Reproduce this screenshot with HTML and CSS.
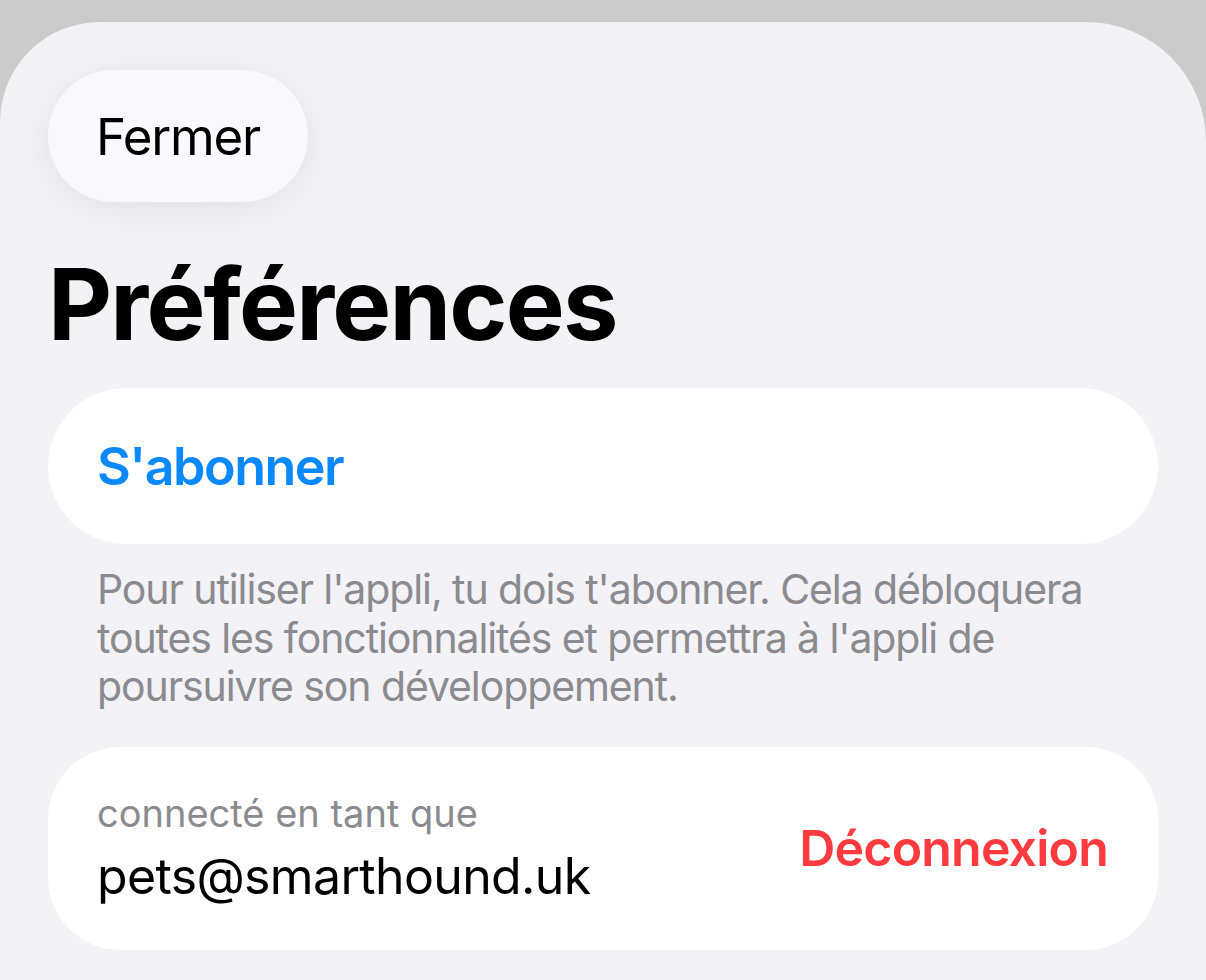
FILE: index.html
```html
<!DOCTYPE html>
<html lang="fr">
<head>
<meta charset="utf-8">
<title>Préférences</title>
<link rel="stylesheet" href="styles.css">
</head>
<body>
<div class="sheet">
  <button class="close-btn">Fermer</button>
  <h1 class="title">Préférences</h1>
  <div class="card card-subscribe">
    <span class="subscribe">S'abonner</span>
  </div>
  <p class="footer">Pour utiliser l'appli, tu dois t'abonner. Cela débloquera toutes les fonctionnalités et permettra à l'appli de poursuivre son développement.</p>
  <div class="card card-account">
    <div class="account">
      <div class="account-label">connecté en tant que</div>
      <div class="account-email">pets@smarthound.uk</div>
    </div>
    <span class="logout">Déconnexion</span>
  </div>
</div>
</body>
</html>
```
FILE: styles.css
```css
html, body {
  margin: 0;
  padding: 0;
}
body {
  background: #cbcbcb;
  padding-top: 22px;
  font-family: Inter, "Noto Sans", sans-serif;
  overflow: hidden;
}
.sheet {
  background: #f2f2f7;
  border-radius: 100px 120px 0 0;
  min-height: 958px;
  box-sizing: border-box;
  padding: 48px 48px 0 48px;
  display: flex;
  flex-direction: column;
  align-items: flex-start;
}
.close-btn {
  width: 260px;
  height: 132px;
  border: none;
  border-radius: 66px;
  background: #f9f9fd;
  box-shadow: 0 8px 50px rgba(0, 0, 0, 0.07);
  font-family: inherit;
  font-size: 51px;
  letter-spacing: -1.2px;
  color: #000;
  padding: 0;
  display: flex;
  align-items: center;
  justify-content: center;
}
.title {
  margin: 52px 0 0 0;
  font-size: 99px;
  line-height: 100px;
  font-weight: 700;
  letter-spacing: -1.8px;
  color: #000;
}
.card {
  align-self: stretch;
  background: #ffffff;
  box-sizing: border-box;
}
.card-subscribe {
  margin-top: 34px;
  height: 156px;
  border-radius: 78px;
  padding: 0 49px;
  display: flex;
  align-items: center;
}
.subscribe {
  color: #0a89fe;
  font-size: 52px;
  font-weight: 600;
  letter-spacing: -1.5px;
}
.footer {
  margin: 21px 0 0 0;
  padding: 0 8px 0 49px;
  font-size: 41px;
  line-height: 48.5px;
  letter-spacing: -1.1px;
  color: #8a8a8f;
}
.card-account {
  margin-top: 36px;
  height: 203px;
  border-radius: 72px;
  padding: 0 50px 0 49px;
  display: flex;
  align-items: center;
  justify-content: space-between;
}
.account {
  display: flex;
  flex-direction: column;
}
.account-label {
  font-size: 38px;
  line-height: 46px;
  color: #8a8a8f;
}
.account-email {
  margin-top: 9px;
  font-size: 50px;
  line-height: 62px;
  letter-spacing: -0.65px;
  color: #000;
}
.logout {
  color: #ff3b40;
  font-size: 50px;
  font-weight: 600;
  letter-spacing: -0.8px;
}
```
